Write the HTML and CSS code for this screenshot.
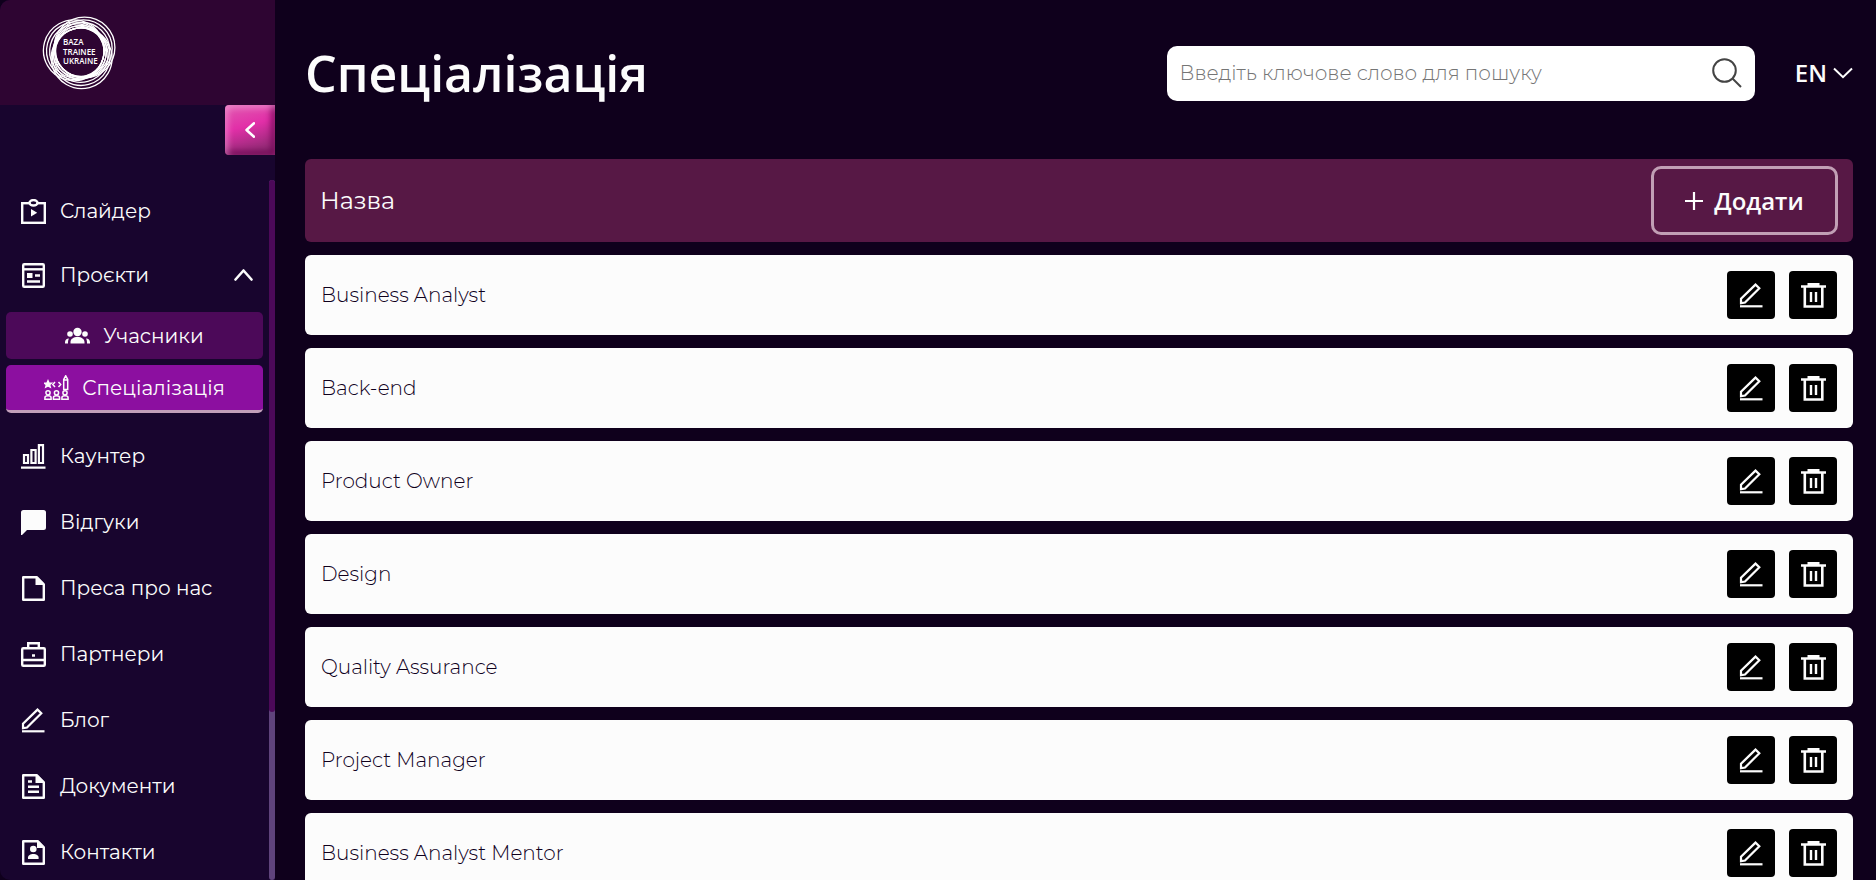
FILE: index.html
```html
<!DOCTYPE html>
<html lang="uk">
<head>
<meta charset="utf-8">
<meta name="viewport" content="width=device-width, initial-scale=1">
<title>Спеціалізація</title>
<link rel="stylesheet" href="styles.css">
</head>
<body>
<svg class="sprite" aria-hidden="true">
  <symbol id="pen" viewBox="0 0 25 25"><path d="M2 20.200V15.800L16.500 1.600 20.300 5.300 6 19.500 2 20.200Z" fill="none" stroke="currentColor" stroke-width="2.200"/><path d="M13.500 4.500l3.800 3.800" stroke="none"/><path d="M1 23.300h22.500" stroke="currentColor" stroke-width="2.200"/></symbol>
  <symbol id="trash" viewBox="0 0 25 25"><path d="M0 3.500h25M6.500 1.400h12M3.800 3.500v20h17.500v-20" fill="none" stroke="currentColor" stroke-width="2.600"/><path d="M10 9v10M15 9v10" stroke="currentColor" stroke-width="2.400"/></symbol>
</svg>
<div class="app">
  <aside class="sidebar">
    <div class="brand">
      <a class="logo" href="#" aria-label="Baza Trainee Ukraine">
        <svg id="logo" width="76" height="76" viewBox="0 0 76 76">
          <g fill="none" stroke="#fff" stroke-width="1.300">
            <g id="rings">
              <circle cx="39.100" cy="36.900" r="25.500"/><circle cx="40.300" cy="35.700" r="27.200"/><circle cx="41.400" cy="34.600" r="28.800"/><circle cx="42.500" cy="33.500" r="30.400"/>
            </g>
            <use href="#rings" transform="rotate(120 38 38)"/>
            <use href="#rings" transform="rotate(240 38 38)"/>
          </g>
          <g class="logo-text"><text x="21" y="31">BAZA</text><text x="21" y="41">TRAINEE</text><text x="21" y="50">UKRAINE</text></g>
        </svg>
      </a>
    </div>
    <button class="collapse" type="button" aria-label="Згорнути меню"><svg width="10" height="16" viewBox="0 0 10 16"><path d="M9 1.300L1.500 8 9 14.700" fill="none" stroke="#fff" stroke-width="2.500" stroke-linecap="round" stroke-linejoin="round"/></svg></button>
    <div class="menu">
      <nav class="nav">
        <a class="item" href="#"><svg class="icon" viewBox="0 0 25 25"><rect x="1.200" y="4.200" width="22.600" height="19.600" fill="none" stroke="currentColor" stroke-width="2.400"/><ellipse cx="12.500" cy="3.800" rx="4" ry="2.700" fill="#18052e" stroke="currentColor" stroke-width="2.400"/><path d="M10 10v7.500l6.200-3.700z" fill="currentColor"/></svg>Слайдер</a>
        <button class="item" type="button" aria-expanded="true"><svg class="icon" viewBox="0 0 25 25"><rect x="2.200" y="1.200" width="20.600" height="22.600" rx="1" fill="none" stroke="currentColor" stroke-width="2.400"/><path d="M2 6.300h21" stroke="currentColor" stroke-width="2.400"/><path d="M6 10h5.500v5H6zM14 11.300h5v2.400h-5zM6 17.300h13v2.400H6z" fill="currentColor"/></svg>Проєкти<svg class="chevron" viewBox="0 0 19 12"><path d="M1.500 10.500l8-9 8 9" fill="none" stroke="currentColor" stroke-width="2.600" stroke-linecap="round" stroke-linejoin="round"/></svg></button>
        <div class="submenu">
          <a class="subitem" href="#"><svg class="icon" viewBox="0 0 25 25" fill="currentColor"><circle cx="12.500" cy="9" r="4.200"/><path d="M5.500 20.500v-1.600c0-3 3-5 7-5s7 2 7 5v1.600zM0 20.500v-1.300c0-2.200 1.500-3.500 4-3.700-.8 1.200-1 2.500-1 5zM25 20.500v-1.300c0-2.200-1.500-3.500-4-3.700.8 1.200 1 2.500 1 5z"/><circle cx="5" cy="11" r="2.800"/><circle cx="20" cy="11" r="2.800"/></svg>Учасники</a>
          <a class="subitem active" href="#" aria-current="page"><svg class="icon" viewBox="0 0 25 25" fill="none" stroke="currentColor" stroke-width="1.500"><path d="M4 5.800l1 2.200 2.400.2-1.800 1.600.6 2.300L4 10.900l-2.200 1.200.6-2.300L.6 8.200 3 8z" fill="currentColor"/><path d="M11 7L8.800 9.500 11 12M14.500 7l2.200 2.500-2.200 2.500M19.700 14.500V4.500L21.700.8l2 3.700v10zM19.700 5h4"/><circle cx="4" cy="17.800" r="2.100"/><circle cx="12.500" cy="17.800" r="2.100"/><circle cx="21" cy="17.800" r="2.100"/><path d="M.9 24.200v-1.500c0-1.500 1.200-2 3.100-2s3.100.5 3.100 2v1.500zM9.400 24.200v-1.500c0-1.500 1.200-2 3.100-2s3.100.5 3.100 2v1.500zM17.900 24.200v-1.500c0-1.500 1.200-2 3.100-2s3.100.5 3.100 2v1.500z"/></svg>Спеціалізація</a>
        </div>
        <a class="item" href="#"><svg class="icon" viewBox="0 0 25 25" fill="none" stroke="currentColor" stroke-width="2.200"><path d="M3 11h4v8H3zM10.400 6h4.200v13h-4.200zM17.900 1.200H22V19h-4.100zM0 23.700h24.500"/></svg>Каунтер</a>
        <a class="item" href="#"><svg class="icon" viewBox="0 0 25 25"><path d="M2.500 0h20Q25 0 25 2.500v15q0 2.500-2.500 2.500H6l-5 5H0V2.500Q0 0 2.500 0z" fill="currentColor"/></svg>Відгуки</a>
        <a class="item" href="#"><svg class="icon" viewBox="0 0 25 25"><path d="M2.200 1.200h13.500l7.100 7.100v15.500H2.200z" fill="none" stroke="currentColor" stroke-width="2.400" stroke-linejoin="round"/><path d="M14.500 1h2l6.500 6.500V9h-8.500z" fill="currentColor"/></svg>Преса про нас</a>
        <a class="item" href="#"><svg class="icon" viewBox="0 0 25 25" fill="none" stroke="currentColor" stroke-width="2.400"><rect x="1.200" y="6.200" width="22.600" height="17.600" rx="1"/><path d="M7.200 6V1.200h10.600V6M1 18h23M11 13.500h3"/></svg>Партнери</a>
        <a class="item" href="#"><svg class="icon"><use href="#pen"/></svg>Блог</a>
        <a class="item" href="#"><svg class="icon" viewBox="0 0 25 25"><path d="M2.200 1.200h13.500l7.100 7.100v15.500H2.200z" fill="none" stroke="currentColor" stroke-width="2.400" stroke-linejoin="round"/><path d="M14.500 1h2l6.500 6.500V9h-8.500z" fill="currentColor"/><path d="M7 7.500h4M7 12.700h11M7 17.700h11" stroke="currentColor" stroke-width="2.400"/></svg>Документи</a>
        <a class="item" href="#"><svg class="icon" viewBox="0 0 25 25"><path d="M2.200 1.200h14.500l6.100 6.100v16.500H2.200z" fill="none" stroke="currentColor" stroke-width="2.400" stroke-linejoin="round"/><path d="M16 1h1.500L23 6.500V8h-7z" fill="currentColor"/><circle cx="12.300" cy="9" r="3.300" fill="currentColor"/><path d="M7 19v-1.500c0-2.300 2.500-3.500 5.300-3.500s5.300 1.200 5.300 3.500V19z" fill="currentColor"/></svg>Контакти</a>
      </nav>
      <div class="track"><div class="thumb"></div></div>
    </div>
  </aside>
  <main class="main">
    <header class="topbar">
      <h1>Спеціалізація</h1>
      <form class="search" role="search">
        <input type="search" aria-label="Пошук" placeholder="Введіть ключове слово для пошуку">
        <button type="button" aria-label="Шукати"><svg width="30" height="30" viewBox="0 0 30 30" fill="none" stroke="#444" stroke-width="2"><circle cx="12.500" cy="12.500" r="11.300"/><path d="M20.500 20.500l8.500 8.500"/></svg></button>
      </form>
      <button class="lang" type="button">EN<svg width="20" height="12" viewBox="0 0 20 12"><path d="M1 1.500l9 8.700 9-8.700" fill="none" stroke="#fff" stroke-width="2"/></svg></button>
    </header>
    <table class="list">
      <thead>
        <tr><th scope="col">Назва</th><td><button class="add" type="button"><svg width="18" height="18" viewBox="0 0 18 18"><path d="M9 0v18M0 9h18" stroke="#fff" stroke-width="2.200"/></svg>Додати</button></td></tr>
      </thead>
      <tbody>
        <tr><td>Business Analyst</td><td><div class="actions"><button type="button" aria-label="Редагувати"><svg class="icon"><use href="#pen"/></svg></button><button type="button" aria-label="Видалити"><svg class="icon"><use href="#trash"/></svg></button></div></td></tr>
        <tr><td>Back-end</td><td><div class="actions"><button type="button" aria-label="Редагувати"><svg class="icon"><use href="#pen"/></svg></button><button type="button" aria-label="Видалити"><svg class="icon"><use href="#trash"/></svg></button></div></td></tr>
        <tr><td>Product Owner</td><td><div class="actions"><button type="button" aria-label="Редагувати"><svg class="icon"><use href="#pen"/></svg></button><button type="button" aria-label="Видалити"><svg class="icon"><use href="#trash"/></svg></button></div></td></tr>
        <tr><td>Design</td><td><div class="actions"><button type="button" aria-label="Редагувати"><svg class="icon"><use href="#pen"/></svg></button><button type="button" aria-label="Видалити"><svg class="icon"><use href="#trash"/></svg></button></div></td></tr>
        <tr><td>Quality Assurance</td><td><div class="actions"><button type="button" aria-label="Редагувати"><svg class="icon"><use href="#pen"/></svg></button><button type="button" aria-label="Видалити"><svg class="icon"><use href="#trash"/></svg></button></div></td></tr>
        <tr><td>Project Manager</td><td><div class="actions"><button type="button" aria-label="Редагувати"><svg class="icon"><use href="#pen"/></svg></button><button type="button" aria-label="Видалити"><svg class="icon"><use href="#trash"/></svg></button></div></td></tr>
        <tr><td>Business Analyst Mentor</td><td><div class="actions"><button type="button" aria-label="Редагувати"><svg class="icon"><use href="#pen"/></svg></button><button type="button" aria-label="Видалити"><svg class="icon"><use href="#trash"/></svg></button></div></td></tr>
      </tbody>
    </table>
  </main>
</div>
</body>
</html>
```
FILE: styles.css
```css
* { box-sizing: border-box; }
body {
  margin: 0;
  background: #0f001c;
  color: #fcfcfc;
  font-family: Montserrat, Inter, sans-serif;
  font-size: 20px;
  line-height: 24px;
}
button { font: inherit; color: inherit; border: 0; padding: 0; background: none; cursor: pointer; }
a { color: inherit; text-decoration: none; }
svg { display: block; flex: none; }
.sprite { position: absolute; width: 0; height: 0; }
.icon { width: 25px; height: 25px; }

.app { display: flex; height: 100vh; overflow: hidden; }

.sidebar {
  display: flex;
  flex-direction: column;
  flex: none;
  width: 275px;
  background: #18052e;
  border-radius: 10px 0 0 10px;
  overflow: hidden;
}
.brand { padding: 14px 42px 15px; background: #2e0532; }
.logo { display: block; width: 76px; }
.logo-text { fill: #fff; font-family: "Open Sans", sans-serif; font-size: 8px; font-weight: 600; }
.collapse {
  display: grid;
  place-items: center;
  align-self: flex-end;
  flex: none;
  width: 50px;
  height: 50px;
  border-radius: 4px 0 0 4px;
  background: linear-gradient(165deg, #e05cb0 0%, #e22fa8 42%, #8a2a70 90%);
  box-shadow: inset 3px 3px 6px rgba(255, 190, 235, .45), inset -4px -4px 6px rgba(110, 0, 80, .75);
}
.menu { display: flex; flex: 1; min-height: 0; margin-top: 25px; }
.nav { flex: 1; min-width: 0; overflow: hidden; }
.item {
  display: flex;
  align-items: center;
  gap: 14px;
  width: 100%;
  height: 66px;
  padding: 0 16px 0 21px;
  text-align: left;
}
.item:first-child { height: 62px; }
.chevron { width: 19px; height: 12px; margin-left: auto; }
.submenu { display: grid; gap: 6px; padding: 4px 6px 10px; }
.subitem {
  display: flex;
  align-items: center;
  justify-content: center;
  gap: 13px;
  height: 47px;
  border-radius: 5px;
  background: #4c0959;
}
.subitem.active { height: 48px; background: #8c0fa0; border-bottom: 3px solid #c29fba; }
.track { flex: none; width: 6px; border-radius: 3px; background: #5f437c; }
.thumb { height: 76%; border-radius: 3px; background: #4c0959; }

.main { flex: 1; min-width: 0; padding: 0 23px 0 30px; }
.topbar { display: flex; align-items: center; height: 146px; }
h1 {
  flex: 1;
  margin: 0;
  font-family: "Open Sans", sans-serif;
  font-size: 50px;
  font-weight: 600;
  line-height: 68px;
}
.search {
  display: flex;
  align-items: center;
  width: 38%;
  height: 55px;
  padding: 0 13px;
  border-radius: 10px;
  background: #fff;
}
.search input {
  flex: 1;
  min-width: 0;
  padding: 0;
  border: 0;
  outline: 0;
  background: none;
  font: inherit;
  font-weight: 300;
  color: #111;
}
.search input::placeholder { color: #757575; opacity: 1; }
.lang {
  display: flex;
  align-items: center;
  gap: 6px;
  margin-left: 40px;
  font-family: "Open Sans", sans-serif;
  font-size: 24px;
  font-weight: 600;
}

.list { width: 100%; border-collapse: separate; border-spacing: 0 13px; }
.list th, .list td { padding: 16px; font-weight: 300; text-align: left; }
.list tr > :first-child { border-radius: 6px 0 0 6px; }
.list tr > :last-child { width: 1px; border-radius: 0 6px 6px 0; }
thead th, thead td { background: #571845; }
.list thead th, .list thead td { padding: 7px 15px; font-size: 24px; font-weight: 400; }
tbody td { background: #fcfcfc; color: #0f001c; }
.add {
  display: flex;
  align-items: center;
  justify-content: center;
  gap: 11px;
  width: 187px;
  height: 69px;
  border: 3px solid #c19fb5;
  border-radius: 10px;
  font-family: "Open Sans", sans-serif;
  font-size: 24px;
  font-weight: 600;
}
.actions { display: flex; justify-content: flex-end; gap: 14px; }
.actions button {
  display: grid;
  place-items: center;
  width: 48px;
  height: 48px;
  border-radius: 4px;
  background: #000;
  color: #fcfcfc;
}
```
